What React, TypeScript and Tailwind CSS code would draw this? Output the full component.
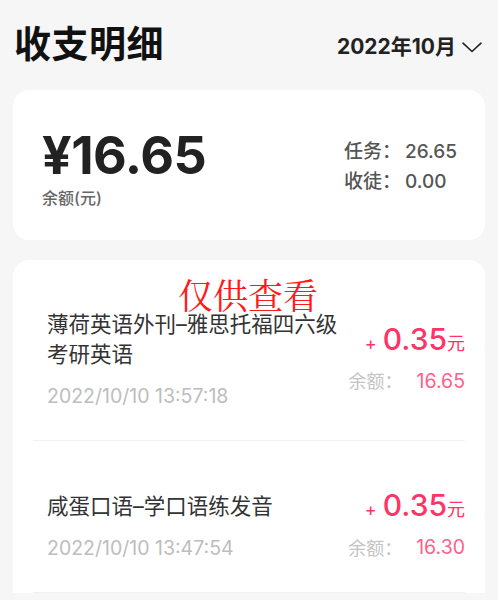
import React from "react";

const font = { fontFamily: '"Inter", "Noto Sans CJK SC", sans-serif' };

function Chevron() {
  return (
    <svg width="20" height="11" viewBox="0 0 20 11" fill="none" className="ml-[6px]">
      <path d="M1 1.2 L10 9.5 L19 1.2" stroke="#222" strokeWidth="1.6" strokeLinecap="round" strokeLinejoin="round" />
    </svg>
  );
}

type Item = { title: string[]; date: string; amount: string; balance: string };

const items: Item[] = [
  { title: ["薄荷英语外刊–雅思托福四六级", "考研英语"], date: "2022/10/10 13:57:18", amount: "0.35", balance: "16.65" },
  { title: ["咸蛋口语–学口语练发音"], date: "2022/10/10 13:47:54", amount: "0.35", balance: "16.30" },
];

function Row({ item }: { item: Item }) {
  return (
    <div className="mx-[20px] border-b border-[#f1f1f1] pt-[49px] pb-[31px] flex items-center justify-between">
      <div className="pl-[14px] flex flex-col">
        {item.title.map((t, i) => (
          <div key={i} className="text-[21.5px] leading-[30px] text-[#333]">{t}</div>
        ))}
        <div className="mt-[14px] text-[19.5px] leading-[26px] text-[#bdbdbd]">{item.date}</div>
      </div>
      <div className="flex flex-col items-end">
        <div className="flex items-baseline h-[30px] leading-[30px] text-[#ff3366]">
          <span className="text-[18px] mr-[6px]">+</span>
          <span className="text-[30px] font-medium">{item.amount}</span>
          <span className="text-[18px]">元</span>
        </div>
        <div className="mt-[15px] flex items-center h-[26px]">
          <span className="text-[18px] text-[#c4c4c4]">余额：</span>
          <span className="ml-[14px] text-[19.5px] text-[#ff5f88]">{item.balance}</span>
        </div>
      </div>
    </div>
  );
}

export default function App() {
  return (
    <div className="w-[498px] h-[600px] overflow-hidden bg-[#f6f6f6]" style={font}>
      <div className="flex items-center justify-between pl-[14px] pr-[16px] pt-[22px] h-[68px]">
        <div className="text-[37px] font-bold text-[#111] leading-[44px] tracking-[0.5px]">收支明细</div>
        <div className="flex items-center pt-[4px]">
          <span className="text-[21px] font-bold text-[#222] leading-[26px]">2022年10月</span>
          <Chevron />
        </div>
      </div>

      <div className="mx-[13px] mt-[22px] h-[150px] rounded-[16px] bg-white flex items-center justify-between pl-[29px] pr-[28px]">
        <div className="flex flex-col pt-[8px]">
          <div className="text-[52px] font-bold text-[#222] leading-[54px] tracking-[-0.5px]">¥16.65</div>
          <div className="text-[16px] text-[#666] font-medium leading-[22px] mt-[4px]">余额(元)</div>
        </div>
        <div className="flex flex-col text-[19px] font-medium text-[#555] leading-[30px] pt-[4px]">
          <div>任务：<span className="ml-[4px]">26.65</span></div>
          <div>收徒：<span className="ml-[4px]">0.00</span></div>
        </div>
      </div>

      <div className="relative mx-[13px] mt-[20px] rounded-t-[16px] bg-white">
        <div
          className="absolute left-[165px] top-[19px] text-[35px] leading-[30px] text-[#ff1a1a]"
          style={{ fontFamily: '"Noto Serif CJK SC", serif' }}
        >
          仅供查看
        </div>
        {items.map((it, i) => (
          <Row key={i} item={it} />
        ))}
      </div>
    </div>
  );
}
